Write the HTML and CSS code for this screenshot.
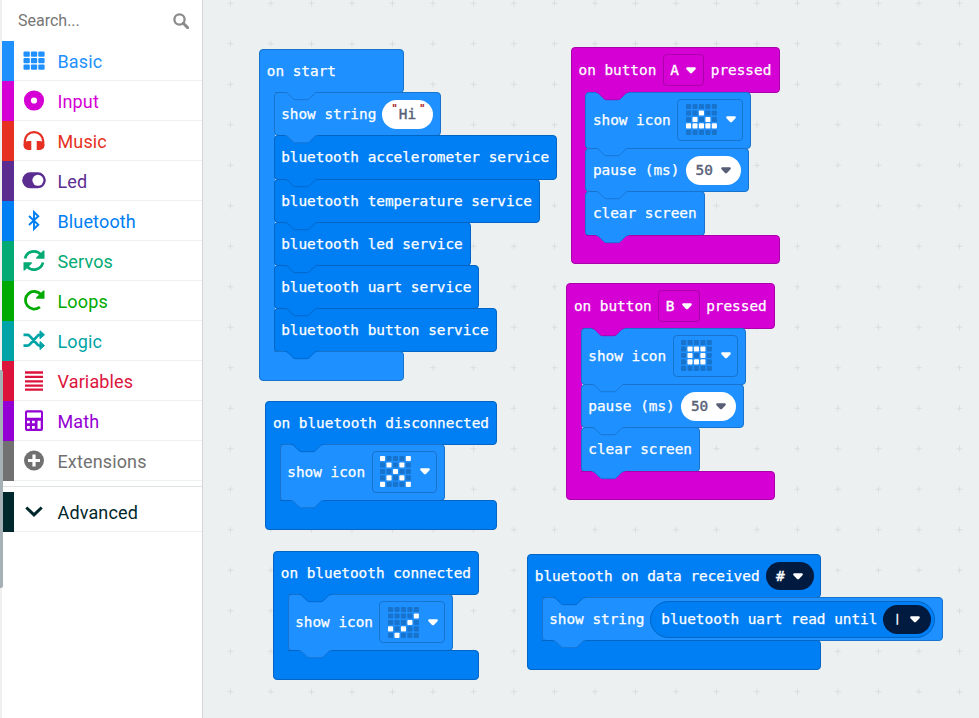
FILE: index.html
```html
<!DOCTYPE html>
<html lang="en">
<head>
<meta charset="utf-8">
<title>Blocks editor</title>
<link rel="stylesheet" href="styles.css">
</head>
<body>
<svg class="defs" width="0" height="0">
  <defs>
    <symbol id="notch" viewBox="0 0 36 10" overflow="visible">
      <path class="notch-fill" d="M0,-.2V.55c2,0 3,1 4,2l4,4c1,1 2,2 4,2h12c2,0 3,-1 4,-2l4,-4c1,-1 2,-2 4,-2V-.2z"/>
      <path class="notch-line" d="M0,.55c2,0 3,1 4,2l4,4c1,1 2,2 4,2h12c2,0 3,-1 4,-2l4,-4c1,-1 2,-2 4,-2"/>
    </symbol>
    <symbol id="arrow" viewBox="0 0 10 7">
      <path d="M1.6.3h6.8C9.900.3 10.200 1.700 9.300 2.600L6.200 5.700C5.500 6.400 4.500 6.400 3.800 5.700L.7 2.600C-.2 1.700.1.3 1.600.3z"/>
    </symbol>
    <rect id="led" width="5.1" height="5.1" rx=".8"/>
    <g id="row"><use href="#led"/><use href="#led" x="6.45"/><use href="#led" x="12.9"/><use href="#led" x="19.35"/><use href="#led" x="25.8"/></g>
    <g id="leds"><use href="#row"/><use href="#row" y="6.45"/><use href="#row" y="12.9"/><use href="#row" y="19.35"/><use href="#row" y="25.8"/></g>
  </defs>
</svg>
<div class="editor">
  <aside class="toolbox">
    <div class="scrollbar"></div>
    <div class="search"><span>Search...</span>
      <svg width="16" height="16" viewBox="0 0 16 16"><circle cx="6.500" cy="6.500" r="5.100" fill="none" stroke="currentColor" stroke-width="2.300"/><path d="M10.300 10.300L14.600 14.600" stroke="currentColor" stroke-width="2.900" stroke-linecap="round"/></svg>
    </div>
    <div class="cat basic"><svg class="ico" viewBox="0 0 24 24"><g fill="currentColor"><rect x="1.500" y="2.500" width="6.300" height="5.200" rx="1"/><rect x="8.900" y="2.500" width="6.300" height="5.200" rx="1"/><rect x="16.300" y="2.500" width="6.300" height="5.200" rx="1"/><rect x="1.500" y="9" width="6.300" height="5.200" rx="1"/><rect x="8.900" y="9" width="6.300" height="5.200" rx="1"/><rect x="16.300" y="9" width="6.300" height="5.200" rx="1"/><rect x="1.500" y="15.500" width="6.300" height="5.200" rx="1"/><rect x="8.900" y="15.500" width="6.300" height="5.200" rx="1"/><rect x="16.300" y="15.500" width="6.300" height="5.200" rx="1"/></g></svg><span>Basic</span></div>
    <div class="cat input"><svg class="ico" viewBox="0 0 24 24"><circle cx="12" cy="11.500" r="6.600" fill="none" stroke="currentColor" stroke-width="7"/></svg><span>Input</span></div>
    <div class="cat music"><svg class="ico" viewBox="0 0 24 24"><path d="M2.800 16.500V12.300a9.200 9.200 0 0 1 18.400 0V16.500" fill="none" stroke="currentColor" stroke-width="2.300"/><path d="M9.300 12v9H7.200C3.800 21 1.600 19.300 1.600 16.500S4 12 7 12zM14.700 12v9h2.100c3.400 0 5.600-1.700 5.600-4.500S20 12 17 12z" fill="currentColor"/></svg><span>Music</span></div>
    <div class="cat led"><svg class="ico" viewBox="0 0 24 24"><rect x=".2" y="3.300" width="23.600" height="16" rx="8" fill="currentColor"/><circle cx="15.900" cy="11.300" r="5.500" fill="#fff"/></svg><span>Led</span></div>
    <div class="cat bluetooth"><svg class="ico" viewBox="0 0 24 24"><path d="M7 7l9.300 8.800L12 20V3l4.300 4.200L7 16" fill="none" stroke="currentColor" stroke-width="1.900"/></svg><span>Bluetooth</span></div>
    <div class="cat servos"><svg class="ico" viewBox="0 0 24 24"><path d="M3 9.500A9.200 9.200 0 0 1 19 5.700M21 13.500A9.200 9.200 0 0 1 5 17.300" fill="none" stroke="currentColor" stroke-width="2.700"/><path d="M22.500 1.500v8.300h-8.300v-1.200l7.100-7.100zM1.500 21.500v-8.300h8.300v1.200l-7.100 7.100z" fill="currentColor"/></svg><span>Servos</span></div>
    <div class="cat loops"><svg class="ico" viewBox="0 0 24 24"><path d="M18.900 5.500A8.800 8.800 0 1 0 17.900 18" fill="none" stroke="currentColor" stroke-width="2.800"/><path d="M22.500 1.500v8.300h-8.300v-1.200l7.100-7.100z" fill="currentColor"/></svg><span>Loops</span></div>
    <div class="cat logic"><svg class="ico" viewBox="0 0 24 24"><path d="M1.500 5.800h3.800c1 0 1.700.3 2.300 1l8 8.800c.6.700 1.300 1 2.200 1H19M1.500 16.600h3.800c1 0 1.700-.3 2.300-1l8-8.800c.6-.7 1.300-1 2.200-1H19" fill="none" stroke="currentColor" stroke-width="2.700"/><path d="M18 1.800l4.500 4-4.500 4zM18 12.600l4.500 4-4.500 4z" fill="currentColor" stroke="currentColor" stroke-width="1" stroke-linejoin="round"/></svg><span>Logic</span></div>
    <div class="cat variables"><svg class="ico" viewBox="0 0 24 24"><path d="M3 3.500h18M3 7.900h18M3 12.300h18M3 16.700h18M3 20.700h18" stroke="currentColor" stroke-width="2.300"/></svg><span>Variables</span></div>
    <div class="cat math"><svg class="ico" viewBox="0 0 24 24"><path fill-rule="evenodd" fill="currentColor" d="M5 1.200h14a2 2 0 0 1 2 2v16.800a2 2 0 0 1-2 2H5a2 2 0 0 1-2-2V3.200a2 2 0 0 1 2-2zM5 3.500v5.300h14V3.500zM5 11.800v2.500h2.800v-2.500zM10 11.800v2.500h2.800v-2.500zM5 17v2.700h2.800v-2.700zM10 17v2.700h2.800v-2.700zM15.500 11.800v7.900h3.200v-7.900z"/></svg><span>Math</span></div>
    <div class="cat extensions"><svg class="ico" viewBox="0 0 24 24"><circle cx="12" cy="11.500" r="10" fill="currentColor"/><path d="M12 5.500v12M6 11.500h12" stroke="#fff" stroke-width="3.200"/></svg><span>Extensions</span></div>
    <div class="divider"></div>
    <div class="cat advanced"><svg class="ico" viewBox="0 0 24 24"><path d="M4.300 7.500l7.700 7.400 7.700-7.400" fill="none" stroke="currentColor" stroke-width="3"/></svg><span>Advanced</span></div>
  </aside>
  <main class="workspace">
    <svg class="grid" width="100%" height="100%"><defs><pattern id="cross" width="40.5" height="40.5" patternUnits="userSpaceOnUse" x="7.200" y="23.500"><path d="M17.250 20.250h6M20.250 17.250v6" stroke="#d7dcdd" stroke-width=".9"/></pattern></defs><rect width="100%" height="100%" fill="url(#cross)"/></svg>

    <section class="hat c-basic start">
      <div class="head"><span>on start</span></div>
      <div class="body">
        <div class="stmt c-basic"><svg class="notch n-basic"><use href="#notch"/></svg><span>show string</span><span class="field text"><i>"</i><b>Hi</b><i>"</i></span></div>
        <div class="stmt c-bt"><svg class="notch n-basic"><use href="#notch"/></svg><span>bluetooth accelerometer service</span></div>
        <div class="stmt c-bt"><svg class="notch n-bt"><use href="#notch"/></svg><span>bluetooth temperature service</span></div>
        <div class="stmt c-bt"><svg class="notch n-bt"><use href="#notch"/></svg><span>bluetooth led service</span></div>
        <div class="stmt c-bt"><svg class="notch n-bt"><use href="#notch"/></svg><span>bluetooth uart service</span></div>
        <div class="stmt c-bt"><svg class="notch n-bt"><use href="#notch"/></svg><span>bluetooth button service</span></div>
      </div>
      <div class="foot"><svg class="notch n-bt"><use href="#notch"/></svg></div>
    </section>

    <section class="hat c-input button-a">
      <div class="head"><span>on button</span><span class="field menu"><b>A</b><svg class="arrow"><use href="#arrow"/></svg></span><span>pressed</span></div>
      <div class="body">
        <div class="stmt tall c-basic"><svg class="notch n-input"><use href="#notch"/></svg><span>show icon</span><span class="field icon"><svg class="matrix" viewBox="0 0 31 31"><use class="off" href="#leds"/><g fill="#fff"><use href="#led" x="12.9" y="6.45"/><use href="#led" x="6.45" y="12.9"/><use href="#led" x="19.35" y="12.9"/><use href="#row" y="19.35"/></g></svg><svg class="arrow"><use href="#arrow"/></svg></span></div>
        <div class="stmt c-basic"><svg class="notch n-basic"><use href="#notch"/></svg><span>pause (ms)</span><span class="field number"><b>50</b><svg class="arrow"><use href="#arrow"/></svg></span></div>
        <div class="stmt c-basic"><svg class="notch n-basic"><use href="#notch"/></svg><span>clear screen</span></div>
      </div>
      <div class="foot"><svg class="notch n-basic"><use href="#notch"/></svg></div>
    </section>

    <section class="hat c-input button-b">
      <div class="head"><span>on button</span><span class="field menu"><b>B</b><svg class="arrow"><use href="#arrow"/></svg></span><span>pressed</span></div>
      <div class="body">
        <div class="stmt tall c-basic"><svg class="notch n-input"><use href="#notch"/></svg><span>show icon</span><span class="field icon"><svg class="matrix" viewBox="0 0 31 31"><use class="off" href="#leds"/><g fill="#fff"><use href="#led" x="6.45" y="6.45"/><use href="#led" x="12.9" y="6.45"/><use href="#led" x="19.35" y="6.45"/><use href="#led" x="6.45" y="12.9"/><use href="#led" x="19.35" y="12.9"/><use href="#led" x="6.45" y="19.35"/><use href="#led" x="12.9" y="19.35"/><use href="#led" x="19.35" y="19.35"/></g></svg><svg class="arrow"><use href="#arrow"/></svg></span></div>
        <div class="stmt c-basic"><svg class="notch n-basic"><use href="#notch"/></svg><span>pause (ms)</span><span class="field number"><b>50</b><svg class="arrow"><use href="#arrow"/></svg></span></div>
        <div class="stmt c-basic"><svg class="notch n-basic"><use href="#notch"/></svg><span>clear screen</span></div>
      </div>
      <div class="foot"><svg class="notch n-basic"><use href="#notch"/></svg></div>
    </section>

    <section class="hat c-bt disconnected">
      <div class="head"><span>on bluetooth disconnected</span></div>
      <div class="body">
        <div class="stmt tall c-basic"><svg class="notch n-bt"><use href="#notch"/></svg><span>show icon</span><span class="field icon"><svg class="matrix" viewBox="0 0 31 31"><use class="off" href="#leds"/><g fill="#fff"><use href="#led"/><use href="#led" x="25.8"/><use href="#led" x="6.45" y="6.45"/><use href="#led" x="19.35" y="6.45"/><use href="#led" x="12.9" y="12.9"/><use href="#led" x="6.45" y="19.35"/><use href="#led" x="19.35" y="19.35"/><use href="#led" y="25.8"/><use href="#led" x="25.8" y="25.8"/></g></svg><svg class="arrow"><use href="#arrow"/></svg></span></div>
      </div>
      <div class="foot"><svg class="notch n-basic"><use href="#notch"/></svg></div>
    </section>

    <section class="hat c-bt connected">
      <div class="head"><span>on bluetooth connected</span></div>
      <div class="body">
        <div class="stmt tall c-basic"><svg class="notch n-bt"><use href="#notch"/></svg><span>show icon</span><span class="field icon"><svg class="matrix" viewBox="0 0 31 31"><use class="off" href="#leds"/><g fill="#fff"><use href="#led" x="25.8" y="6.45"/><use href="#led" x="19.35" y="12.9"/><use href="#led" y="19.35"/><use href="#led" x="12.9" y="19.35"/><use href="#led" x="6.45" y="25.8"/></g></svg><svg class="arrow"><use href="#arrow"/></svg></span></div>
      </div>
      <div class="foot"><svg class="notch n-basic"><use href="#notch"/></svg></div>
    </section>

    <section class="hat c-bt received">
      <div class="head"><span>bluetooth on data received</span><span class="field dark"><b>#</b><svg class="arrow"><use href="#arrow"/></svg></span></div>
      <div class="body">
        <div class="stmt c-basic"><svg class="notch n-bt"><use href="#notch"/></svg><span>show string</span><span class="reporter c-bt"><span>bluetooth uart read until</span><span class="field dark"><b class="bar">|</b><svg class="arrow"><use href="#arrow"/></svg></span></span></div>
      </div>
      <div class="foot"><svg class="notch n-basic"><use href="#notch"/></svg></div>
    </section>
  </main>
</div>
</body>
</html>
```
FILE: styles.css
```css
* { box-sizing: border-box; }
body { margin: 0; height: 718px; overflow: hidden; }
.defs { position: absolute; }
.editor { display: flex; height: 718px; background: #ecf0f1; }

/* toolbox */
.toolbox {
  position: relative;
  flex: none;
  width: 203px;
  height: 718px;
  padding-left: 2px;
  background: linear-gradient(90deg, #f0f0f0 2px, #fff 2px);
  border-right: 1px solid #d2d6d8;
  font-family: Roboto, sans-serif;
}
.scrollbar { position: absolute; left: 0; top: 370px; width: 3px; height: 218px; background: #a5b1b5; border-radius: 0 2px 2px 0; }
.search {
  height: 41px;
  display: flex;
  align-items: center;
  justify-content: space-between;
  padding: 0 13.500px 0 16px;
  color: #767676;
  font-size: 16px;
}
.search svg { color: #8b8b8b; }
.cat {
  height: 40px;
  display: flex;
  align-items: center;
  border-left: 12px solid currentColor;
  font-size: 18px;
  letter-spacing: .14px;
  background: linear-gradient(#ecf0f1, #ecf0f1) 0 100% / 100% 1px no-repeat;
}
.cat .ico { width: 24px; height: 24px; margin: -1px 11.500px 0 8px; display: block; }
.basic { color: #1e90ff; }
.input { color: #d400d4; }
.music { color: #e63022; }
.led { color: #5c2d91; }
.bluetooth { color: #007ef4; }
.servos { color: #03aa74; }
.loops { color: #00aa00; }
.logic { color: #00a4a6; }
.variables { color: #dc143c; }
.math { color: #9400d3; }
.extensions { color: #717171; }
.advanced { color: #00272b; }
.divider { height: 11px; padding-top: 5px; }
.divider::before { content: ""; display: block; height: 1px; background: #dfe3e4; }

/* workspace */
.workspace { position: relative; flex: 1; font: 14.4px/20px "DejaVu Sans Mono", monospace; letter-spacing: -.02px; color: #fff; -webkit-text-stroke: .25px; }
.grid { position: absolute; inset: 0; }
.c-basic { --fill: #1e90ff; --line: #1873cc; }
.c-bt { --fill: #007ef4; --line: #0065c3; }
.c-input { --fill: #d400d4; --line: #aa00aa; }

.hat { position: absolute; display: flex; flex-direction: column; align-items: flex-start; }
.start { left: 56.300px; top: 49px; --w: 145px; }
.button-a { left: 368px; top: 47px; --w: 209px; --head: 46.200px; }
.button-b { left: 363.400px; top: 283px; --w: 209px; --head: 46.200px; }
.disconnected { left: 62.400px; top: 401px; --w: 231.500px; }
.connected { left: 70.300px; top: 551.300px; --w: 206px; }
.received { left: 324.300px; top: 554px; --w: 294.200px; }

.head, .foot { width: var(--w); background: var(--fill); border: 1px solid var(--line); }
.head { height: var(--head, 44.200px); border-radius: 4px 4px 4px 0; padding-left: 6.500px; display: flex; align-items: center; gap: 6.500px; }
.body { position: relative; margin: -1px 0 0; padding-left: 14.400px; display: flex; flex-direction: column; align-items: flex-start; }
.body::before { content: ""; position: absolute; left: 0; top: 0; bottom: -1px; width: 15px; background: var(--fill); border-left: 1px solid var(--line); }
.foot { position: relative; height: 29.800px; margin-top: -1px; border-radius: 0 4px 4px 4px; }
.foot::before { content: ""; position: absolute; left: 0; top: -1px; width: 14px; height: 1px; background: var(--fill); }

.stmt {
  position: relative;
  height: 44.200px;
  margin-bottom: -1px;
  padding: 0 7px 0 6.500px;
  display: flex;
  align-items: center;
  gap: 6px;
  white-space: nowrap;
  background: var(--fill);
  border: 1px solid var(--line);
  border-radius: 4px;
}
.stmt:last-child { margin-bottom: 0; }
.stmt.tall { height: 57px; padding-bottom: 1.500px; }
.notch { position: absolute; left: 10px; top: -1px; width: 32.400px; height: 9px; overflow: visible; }
.foot .notch { left: 24.400px; }
.notch use { fill: var(--nf); stroke: var(--nl); }
.notch-fill { stroke: none; }
.notch-line { fill: none; stroke-width: 1; }
.n-basic { --nf: #1e90ff; --nl: #1873cc; }
.n-bt { --nf: #007ef4; --nl: #0065c3; }
.n-input { --nf: #d400d4; --nl: #aa00aa; }

/* fields */
.field { flex: none; display: flex; align-items: center; }
.field b { font-weight: 400; -webkit-text-stroke: .4px; }
.arrow { width: 10px; height: 7px; fill: currentColor; display: block; }
.menu { width: 41.500px; height: 31.500px; padding-left: 6.500px; gap: 7.500px; border: 1px solid var(--line); border-radius: 4px; }
.icon { width: 65.500px; height: 42px; margin-left: .500px; padding-left: 7.500px; gap: 9px; border: 1px solid var(--line); border-radius: 4px; }
.matrix { width: 31px; height: 31px; display: block; }
.off { fill: #1873cc; }
.text, .number { height: 28.800px; border-radius: 15px; background: #fff; color: #575e75; }
.text { width: 51px; padding-left: 9px; }
.text i { align-self: flex-start; font: 11px/13px "DejaVu Sans Mono", monospace; color: #a31515; padding-top: 2px; width: 7px; }
.text i:last-child { margin-left: 4px; }
.text b { margin: 0 -1px 0 .500px; }
.number { width: 55px; margin-left: .700px; padding-left: 9.500px; gap: 8px; }
.dark { width: 48px; height: 28.800px; padding-left: 10px; gap: 8px; border-radius: 15px; background: #001a40; }
.dark .bar { font-size: 11px; width: 8.700px; text-align: center; }
.reporter {
  height: 37px;
  width: 285px;
  padding-left: 10px;
  display: flex;
  align-items: center;
  gap: 5.500px;
  border: 1px solid var(--line);
  border-radius: 19px;
  background: var(--fill);
}
```
